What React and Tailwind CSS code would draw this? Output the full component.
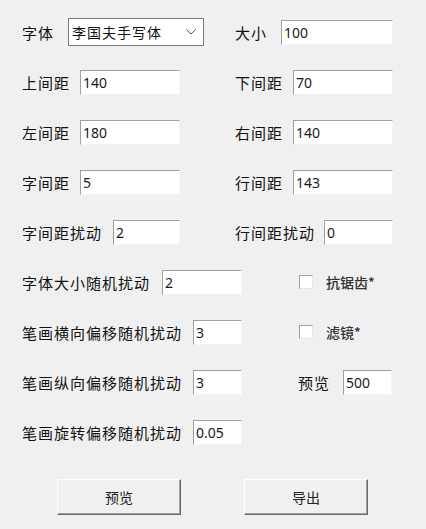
import { useState } from "react";

const FONT = { fontFamily: '"Noto Sans CJK SC", "Noto Sans", sans-serif' };

// sunken winforms-style textbox
const Field = ({ value, width }) => {
  const [v, setV] = useState(value);
  return (
    <input
      value={v}
      onChange={(e) => setV(e.target.value)}
      className={`${width} h-[25px] bg-white border border-t-[#a0a0a0] border-l-[#a0a0a0] border-r-[#f4f4f4] border-b-[#f4f4f4] pl-[2px] text-[14px] text-[#1a1a1a] outline-none font-['Noto_Sans',sans-serif]`}
    />
  );
};

const Label = ({ children, width }) => (
  <span className={`${width} shrink-0 text-[15px] tracking-[1px] text-[#111] leading-none`}>{children}</span>
);

const Check = ({ label }) => {
  const [on, setOn] = useState(false);
  return (
    <label className="flex items-center cursor-pointer" onClick={() => setOn(!on)}>
      <span className="w-[14px] h-[14px] ml-[64px] bg-white border border-t-[#a0a0a0] border-l-[#a0a0a0] border-r-[#e6e6e6] border-b-[#e6e6e6] flex items-center justify-center text-[10px] leading-none">
        {on ? "✓" : ""}
      </span>
      <span className="ml-[13px] text-[14px] font-medium text-[#333] leading-none">{label}</span>
    </label>
  );
};

const Button = ({ children }) => (
  <button className="w-[124px] h-[36px] bg-[#f0f0f0] border border-t-white border-l-white border-r-[#696969] border-b-[#696969] shadow-[inset_-1px_-1px_0_#a0a0a0] text-[14px] text-[#222]">
    {children}
  </button>
);

const Row = ({ left, right }) => (
  <div className="flex h-[50px] items-center">
    <div className="w-[235px] pl-[22px] flex items-center">{left}</div>
    <div className="flex-1 flex items-center">{right}</div>
  </div>
);

export default function App() {
  return (
    <div className="w-[426px] h-[529px] bg-[#f0f0f0] pt-[7px] overflow-hidden" style={FONT}>
      <Row
        left={
          <>
            <Label width="w-[46px]">字体</Label>
            <div className="w-[136px] h-[28px] bg-white border border-[#7a7a7a] flex items-center justify-between pl-[3px] pr-[6px]">
              <span className="text-[14px] tracking-[1px] text-[#111]">李国夫手写体</span>
              <svg width="10" height="6" viewBox="0 0 10 6" className="mr-[1px]">
                <polyline points="0.5,0.5 5,5 9.5,0.5" fill="none" stroke="#555" strokeWidth="1" />
              </svg>
            </div>
          </>
        }
        right={
          <>
            <Label width="w-[46px]">大小</Label>
            <Field value="100" width="w-[112px]" />
          </>
        }
      />
      <Row
        left={<><Label width="w-[58px]">上间距</Label><Field value="140" width="w-[100px]" /></>}
        right={<><Label width="w-[58px]">下间距</Label><Field value="70" width="w-[100px]" /></>}
      />
      <Row
        left={<><Label width="w-[58px]">左间距</Label><Field value="180" width="w-[100px]" /></>}
        right={<><Label width="w-[58px]">右间距</Label><Field value="140" width="w-[100px]" /></>}
      />
      <Row
        left={<><Label width="w-[58px]">字间距</Label><Field value="5" width="w-[100px]" /></>}
        right={<><Label width="w-[58px]">行间距</Label><Field value="143" width="w-[100px]" /></>}
      />
      <Row
        left={<><Label width="w-[91px]">字间距扰动</Label><Field value="2" width="w-[67px]" /></>}
        right={<><Label width="w-[89px]">行间距扰动</Label><Field value="0" width="w-[69px]" /></>}
      />
      <Row
        left={<><Label width="w-[140px]">字体大小随机扰动</Label><Field value="2" width="w-[80px]" /></>}
        right={<Check label="抗锯齿*" />}
      />
      <Row
        left={<><Label width="w-[171px]">笔画横向偏移随机扰动</Label><Field value="3" width="w-[49px]" /></>}
        right={<Check label="滤镜*" />}
      />
      <Row
        left={<><Label width="w-[171px]">笔画纵向偏移随机扰动</Label><Field value="3" width="w-[49px]" /></>}
        right={<><span className="ml-[63px]" /><Label width="w-[45px]">预览</Label><Field value="500" width="w-[49px]" /></>}
      />
      <Row
        left={<><Label width="w-[171px]">笔画旋转偏移随机扰动</Label><Field value="0.05" width="w-[49px]" /></>}
        right={null}
      />
      <div className="flex mt-[22px] pl-[57px] gap-[63px]">
        <Button>预览</Button>
        <Button>导出</Button>
      </div>
    </div>
  );
}
